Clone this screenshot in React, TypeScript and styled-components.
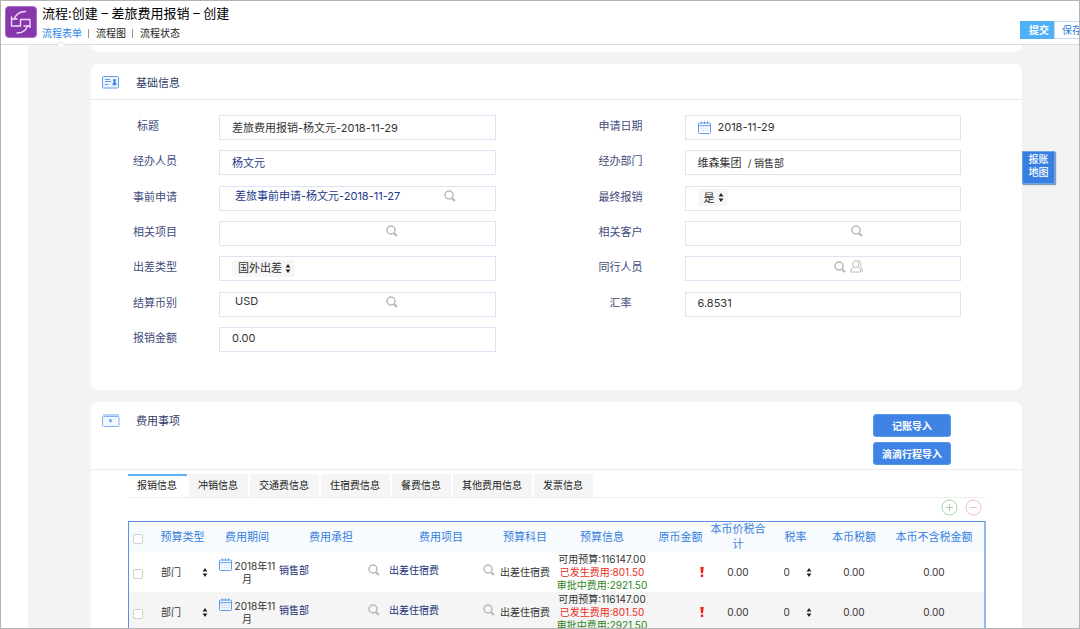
import React from "react";
import styled, { createGlobalStyle } from "styled-components";

const GlobalStyle = createGlobalStyle`
  *, *::before, *::after { box-sizing: border-box; }
  body {
    margin: 0;
    font-family: Inter, "Noto Sans CJK SC", sans-serif;
    font-size: 11px;
    color: #333;
    background: #fff;
  }
  button, input, select { font: inherit; color: inherit; }
  a { text-decoration: none; color: inherit; }
  h1, h2 { margin: 0; font-weight: 400; }
`;

const Page = styled.div`
  height: 100vh;
  display: flex;
  flex-direction: column;
  border: 1px solid #b4b4b4;
  overflow: hidden;
`;

const Header = styled.header`
  flex: none;
  display: flex;
  gap: 5px;
  height: 44px;
  padding: 5px 0 0 4px;
  border-bottom: 1px solid #dcdcdc;
`;

const Logo = styled.svg`
  flex: none;
  width: 32px;
  height: 32px;
`;

const Heading = styled.div`
  flex: 1;
  min-width: 0;
`;

const PageTitle = styled.h1`
  font-size: 13px;
  line-height: 14px;
  color: #000;
  white-space: nowrap;
`;

const Nav = styled.nav`
  display: flex;
  align-items: center;
  margin-top: 5px;
  font-size: 10px;
  line-height: 16px;
  color: #222;
`;

const NavLink = styled.a<{ $active?: boolean }>`
  position: relative;
  color: ${(p) => (p.$active ? "#2f86e8" : "#222")};
`;

const NavNotch = styled.svg`
  position: absolute;
  left: 14px;
  top: 16px;
  width: 10px;
  height: 6px;
`;

const NavDivider = styled.span`
  width: 1px;
  height: 9px;
  margin: 0 7px 0 6px;
  background: #999;
`;

const Actions = styled.div`
  flex: 0 0 59px;
  display: flex;
  align-items: flex-start;
  padding-top: 15px;
  overflow: hidden;
`;

const ActionButton = styled.button<{ $primary?: boolean }>`
  flex: none;
  height: 18px;
  padding: ${(p) => (p.$primary ? "0 4px 0 8px" : "0 7px")};
  font-size: 10px;
  line-height: 16px;
  border: 1px solid ${(p) => (p.$primary ? "#4fb0f8" : "#c3ddf7")};
  background: ${(p) => (p.$primary ? "#4fb0f8" : "#fff")};
  color: ${(p) => (p.$primary ? "#fff" : "#2f7fd8")};
  font-weight: ${(p) => (p.$primary ? 700 : 400)};
`;

const Body = styled.main`
  flex: 1;
  min-height: 0;
  margin-left: 27px;
  padding: 0 57px 0 63px;
  background: #f3f3f3;
  overflow: hidden;
`;

const Card = styled.section`
  margin-bottom: 12px;
  background: #fff;
  border-radius: 7px;
`;

const CardEnd = styled.div`
  height: 7px;
  margin-bottom: 12px;
  background: #fff;
  border-radius: 0 0 7px 7px;
`;

const CardHead = styled.div`
  display: flex;
  align-items: flex-start;
  min-height: 36px;
  padding: 12px 71px 4px 11px;
  border-bottom: 1px solid #ebecf0;
`;

const CardIcon = styled.svg`
  flex: none;
  width: 18px;
  height: 13px;
`;

const CardTitle = styled.h2`
  flex: 1;
  margin-left: 16px;
  font-size: 11px;
  line-height: 14px;
  color: #2f3b66;
`;

const ImportButtons = styled.div`
  display: flex;
  flex-direction: column;
  gap: 5px;
`;

const ImportButton = styled.button`
  width: 78px;
  height: 23px;
  padding: 0;
  border: 1px solid #5b98ea;
  border-radius: 3px;
  background: #3f84e4;
  color: #fff;
  font-size: 10px;
  font-weight: 700;
  line-height: 20px;
`;

const Form = styled.form`
  display: grid;
  grid-template-columns: 1fr 1fr;
  align-content: space-between;
  min-height: 237px;
  margin: 15px 0 0;
`;

const FormCard = styled(Card)`
  padding-bottom: 38px;
`;

const Field = styled.div`
  display: grid;
  grid-template-columns: 128px 1fr;
  padding-right: 61px;
`;

const FieldLabel = styled.label<{ $required?: boolean }>`
  padding-right: ${(p) => (p.$required ? 14 : 0)}px;
  line-height: 23px;
  text-align: center;
  color: #3f4b7c;
`;

const Box = styled.div`
  display: flex;
  align-items: center;
  height: 25px;
  padding: 0 0 1px 12px;
  border: 1px solid #dfe2f0;
  background: #fff;
`;

const PlainInput = styled.input`
  flex: 1;
  min-width: 0;
  height: 20px;
  padding: 0 0 1px;
  border: 0;
  outline: 0;
  background: none;
`;

const ValueLink = styled.a`
  color: #1c3a8a;
`;

const SmallText = styled.span`
  font-size: 10px;
`;

const Lookup = styled.div`
  display: flex;
  align-items: center;
  gap: 4px;
  padding-bottom: 3px;
`;

const LookupInput = styled.input<{ $width: number; $link?: boolean }>`
  width: ${(p) => p.$width}px;
  height: 18px;
  padding: 0 0 2px 3px;
  border: 0;
  outline: 0;
  background: none;
  color: ${(p) => (p.$link ? "#1c3a8a" : "#333")};
`;

const IconButton = styled.button`
  display: flex;
  padding: 0;
  border: 0;
  background: none;
`;

const DateBox = styled(Box)`
  gap: 7px;
  padding-bottom: 0;
`;

const SelectWrap = styled.span<{ $tint?: boolean; $width?: number }>`
  position: relative;
  display: inline-block;
  width: ${(p) => (p.$width ? `${p.$width}px` : "auto")};
  height: 17px;
  border-radius: 3px;
  background: ${(p) => (p.$tint ? "#f6f6f6" : "transparent")};

  select {
    width: ${(p) => (p.$width ? "100%" : "auto")};
    height: 17px;
    padding: 0 13px 0 6px;
    border: 0;
    outline: 0;
    background: none;
    appearance: none;
    line-height: 16px;
    display: block;
  }

  svg {
    position: absolute;
    right: ${(p) => (p.$width ? 2 : 4)}px;
    top: 4px;
    pointer-events: none;
  }
`;

const FloatButton = styled.button`
  position: absolute;
  top: 151px;
  right: 25px;
  width: 33px;
  height: 33px;
  padding: 0 5px 4px;
  border: 1px solid #6ba3ee;
  background: #3780e2;
  box-shadow: 1px 1px 1px #8a9bb5;
  color: #fff;
  font-size: 10px;
  font-weight: 500;
  line-height: 13px;
`;

const Detail = styled.div`
  padding: 4px 36px 0 37px;
`;

const Tabs = styled.div`
  display: flex;
  gap: 2px;
  border-bottom: 1px solid #f1eeee;
`;

const Tab = styled.button<{ $active?: boolean }>`
  height: 23px;
  padding: 0 10px 2px 9px;
  border: 0;
  border-top: 2px solid ${(p) => (p.$active ? "#5cb0f5" : "#f5f5f5")};
  background: ${(p) => (p.$active ? "#fff" : "#f5f5f5")};
  font-size: 10px;
  line-height: 19px;
  color: #222;
  white-space: nowrap;
`;

const RowTools = styled.div`
  display: flex;
  justify-content: flex-end;
  gap: 7px;
  padding: 1px 4px 5px 0;
`;

const ExpenseTable = styled.table`
  width: 100%;
  table-layout: fixed;
  border-collapse: separate;
  border-spacing: 0;
  border: 1px solid #5b93e0;
  border-right: 2px solid #93b8ea;
  font-size: 10px;

  th, td {
    padding: 0;
    text-align: center;
    vertical-align: middle;
    font-weight: 400;
  }
  th {
    height: 30px;
    font-size: 11px;
    line-height: 15px;
    color: #3580de;
    background: #f8fbfe;
  }
  td {
    height: 40px;
    line-height: 13px;
  }
  tbody tr:nth-child(even) td { background: #f5f5f5; }
`;

const Check = styled.input`
  appearance: none;
  display: block;
  width: 10px;
  height: 10px;
  margin: 3px 0 0 4px;
  border: 1px solid #cfcfcf;
  border-radius: 2px;
  background: #fff;
`;

const Period = styled.div`
  white-space: normal;

  svg {
    margin-right: 3px;
    vertical-align: -1px;
  }
`;

const CellLookup = styled.div`
  display: flex;
  align-items: center;
  justify-content: space-between;
  padding: 0 4px 4px 1px;
  color: #1c2f78;
`;

const ItemLookup = styled(CellLookup)`
  padding: 0 3px 4px 5px;
`;

const Line = styled.div<{ $color: string }>`
  color: ${(p) => p.$color};
  white-space: nowrap;
`;

const Alert = styled.svg`
  display: block;
  margin: 0 5px 0 auto;
`;

function SearchIcon() {
  return (
    <svg width="12" height="12" viewBox="0 0 12 12" fill="none" stroke="#b9b9b9">
      <circle cx="5" cy="5" r="4" strokeWidth="1.500" />
      <path d="M7.800 8.200l3.200 2.800" strokeWidth="2.200" />
    </svg>
  );
}

function PeopleIcon() {
  return (
    <svg width="13" height="13" viewBox="0 0 13 13" fill="none" stroke="#bcbcbc">
      <ellipse cx="5.800" cy="4" rx="3" ry="3.500" />
      <path d="M4 7C1.800 7.800.9 9.200.7 12h9.800c-.1-2.800-.9-4.200-2.900-5" />
      <path d="M8.300.8c2.700.1 3.500 3.500 1.700 5.400 1.400.7 2.200 2.200 2.400 4.800h-1.600" />
    </svg>
  );
}

function CalendarIcon() {
  return (
    <svg width="13" height="13" viewBox="0 0 13 13" fill="none" stroke="#5f9bea">
      <rect x=".5" y="2" width="12" height="10.500" rx="1" />
      <path d="M.5 4.700h12M3.500.5v2.500M6.500.5v2.500M9.500.5v2.500" />
      <path d="M2.500 7.200h8M2.500 9.700h8" strokeDasharray="1 1.300" strokeOpacity=".6" />
    </svg>
  );
}

function Arrows() {
  return (
    <svg width="6" height="9" viewBox="0 0 6 9" fill="#222">
      <path d="M3 0l2.400 3.500H.6zM3 9L.6 5.500h4.800z" />
    </svg>
  );
}

function Select(props: { label?: string; id?: string; value: string; tint?: boolean; width?: number }) {
  return (
    <SelectWrap $tint={props.tint} $width={props.width}>
      <select id={props.id} aria-label={props.label} defaultValue={props.value}>
        <option>{props.value}</option>
      </select>
      <Arrows />
    </SelectWrap>
  );
}

function LookupField(props: { id: string; value?: string; width: number; link?: boolean; people?: boolean }) {
  return (
    <Box>
      <Lookup>
        <LookupInput id={props.id} $width={props.width} $link={props.link} defaultValue={props.value ?? ""} />
        <IconButton type="button" aria-label="搜索"><SearchIcon /></IconButton>
        {props.people && <IconButton type="button" aria-label="选择人员"><PeopleIcon /></IconButton>}
      </Lookup>
    </Box>
  );
}

function FormField(props: { id: string; label: string; required?: boolean; children: React.ReactNode }) {
  return (
    <Field>
      <FieldLabel htmlFor={props.id} $required={props.required}>{props.label}</FieldLabel>
      {props.children}
    </Field>
  );
}

const tabs = ["报销信息", "冲销信息", "交通费信息", "住宿费信息", "餐费信息", "其他费用信息", "发票信息"];

const columns: [string, number][] = [
  ["", 20],
  ["预算类型", 67],
  ["费用期间", 62],
  ["费用承担", 106],
  ["费用项目", 114],
  ["预算科目", 54],
  ["预算信息", 100],
  ["原币金额", 57],
  ["本币价税合计", 58],
  ["税率", 57],
  ["本币税额", 60],
  ["本币不含税金额", 100],
];

const Col = styled.col<{ $w: number }>`
  width: ${(p) => p.$w}px;
`;

const rows = [1, 2];

export default function App() {
  return (
    <Page>
      <GlobalStyle />
      <Header>
        <Logo viewBox="0 0 32 32" fill="none">
          <rect x=".5" y=".5" width="31" height="31" rx="3.500" fill="#8638ab" stroke="#a86cc6" />
          <g stroke="#f3d9fa" strokeWidth="1.400" strokeLinejoin="round" strokeLinecap="round">
            <path d="M20.500 5.500C14 5.500 11 8.500 9 13" />
            <path d="M6.500 11v9h9v-6.500h9.500v8" />
            <path d="M6.500 13h5.500M19 20h5.500" />
            <path d="M12 27c6 0 9-3 10.500-7" />
          </g>
        </Logo>
        <Heading>
          <PageTitle>流程:创建 – 差旅费用报销 – 创建</PageTitle>
          <Nav>
            <NavLink href="#form" $active>
              流程表单
              <NavNotch viewBox="0 0 10 6" fill="#fff" stroke="#dcdcdc">
                <path d="M0 5.500l5-5 5 5" />
              </NavNotch>
            </NavLink>
            <NavDivider />
            <NavLink href="#chart">流程图</NavLink>
            <NavDivider />
            <NavLink href="#state">流程状态</NavLink>
          </Nav>
        </Heading>
        <Actions>
          <ActionButton $primary>提交</ActionButton>
          <ActionButton>保存</ActionButton>
        </Actions>
      </Header>

      <Body>
        <CardEnd />
        <FormCard>
          <CardHead>
            <CardIcon viewBox="0 0 18 13" fill="none" stroke="#5f9bea">
              <rect x=".5" y=".5" width="16" height="11.500" rx="1" fill="#edf4fd" />
              <path d="M3 3.500h5M3 5.500h6M3 8.500h3" />
              <circle cx="12.500" cy="4.500" r="1.400" fill="#3f84e4" stroke="none" />
              <path d="M10.500 9.200c0-4.500 4-4.500 4 0z" fill="#3f84e4" stroke="none" />
            </CardIcon>
            <CardTitle>基础信息</CardTitle>
          </CardHead>
          <Form>
            <FormField id="title" label="标题" required>
              <Box><PlainInput id="title" defaultValue="差旅费用报销-杨文元-2018-11-29" /></Box>
            </FormField>
            <FormField id="date" label="申请日期">
              <DateBox><CalendarIcon /><PlainInput id="date" defaultValue="2018-11-29" /></DateBox>
            </FormField>
            <FormField id="person" label="经办人员">
              <Box><ValueLink id="person" href="#person">杨文元</ValueLink></Box>
            </FormField>
            <FormField id="dept" label="经办部门">
              <Box><span id="dept">维森集团&nbsp; <SmallText>/ 销售部</SmallText></span></Box>
            </FormField>
            <FormField id="prior" label="事前申请">
              <LookupField id="prior" width={208} link value="差旅事前申请-杨文元-2018-11-27" />
            </FormField>
            <FormField id="final" label="最终报销">
              <Box><Select id="final" value="是" tint /></Box>
            </FormField>
            <FormField id="project" label="相关项目">
              <LookupField id="project" width={150} />
            </FormField>
            <FormField id="customer" label="相关客户">
              <LookupField id="customer" width={149} />
            </FormField>
            <FormField id="trip" label="出差类型">
              <Box><Select id="trip" value="国外出差" tint /></Box>
            </FormField>
            <FormField id="peers" label="同行人员">
              <LookupField id="peers" width={132} people />
            </FormField>
            <FormField id="currency" label="结算币别">
              <LookupField id="currency" width={150} value="USD" />
            </FormField>
            <FormField id="rate" label="汇率">
              <Box><PlainInput id="rate" defaultValue="6.8531" /></Box>
            </FormField>
            <FormField id="amount" label="报销金额">
              <Box><PlainInput id="amount" defaultValue="0.00" /></Box>
            </FormField>
          </Form>
        </FormCard>

        <Card>
          <CardHead>
            <CardIcon viewBox="0 0 18 13" fill="none" stroke="#7fb0f2">
              <rect x="1.500" y=".5" width="15" height="2" fill="#b9d5f8" stroke="#b9d5f8" />
              <rect x=".5" y="2.500" width="16.500" height="10" rx="1" fill="#f4f8fe" />
              <path d="M6.500 5.500h4L8.500 9z" fill="#5f9bea" stroke="none" />
            </CardIcon>
            <CardTitle>费用事项</CardTitle>
            <ImportButtons>
              <ImportButton>记账导入</ImportButton>
              <ImportButton>滴滴行程导入</ImportButton>
            </ImportButtons>
          </CardHead>
          <Detail>
            <Tabs role="tablist">
              {tabs.map((t, i) => (
                <Tab key={t} role="tab" aria-selected={i === 0} $active={i === 0}>{t}</Tab>
              ))}
            </Tabs>
            <RowTools>
              <IconButton aria-label="添加">
                <svg width="17" height="17" viewBox="0 0 17 17" fill="none" stroke="#a5d6a8">
                  <circle cx="8.500" cy="8.500" r="7.500" />
                  <path d="M5 8.500h7M8.500 5v7" />
                </svg>
              </IconButton>
              <IconButton aria-label="删除">
                <svg width="17" height="17" viewBox="0 0 17 17" fill="none" stroke="#f0bcc0">
                  <circle cx="8.500" cy="8.500" r="7.500" />
                  <path d="M5 8.500h7" />
                </svg>
              </IconButton>
            </RowTools>
            <ExpenseTable>
              <colgroup>
                {columns.map(([name, w]) => <Col key={name} $w={w} />)}
              </colgroup>
              <thead>
                <tr>
                  {columns.map(([name]) => (
                    <th key={name} scope="col">{name || <Check type="checkbox" aria-label="全选" />}</th>
                  ))}
                </tr>
              </thead>
              <tbody>
                {rows.map((r) => (
                  <tr key={r}>
                    <td><Check type="checkbox" aria-label="选择" /></td>
                    <td><Select label="预算类型" value="部门" width={55} /></td>
                    <td><Period><CalendarIcon />2018年11月</Period></td>
                    <td><CellLookup><a href="#dept">销售部</a><IconButton aria-label="搜索"><SearchIcon /></IconButton></CellLookup></td>
                    <td><ItemLookup><a href="#item">出差住宿费</a><IconButton aria-label="搜索"><SearchIcon /></IconButton></ItemLookup></td>
                    <td>出差住宿费</td>
                    <td>
                      <Line $color="#333">可用预算:116147.00</Line>
                      <Line $color="#ee2a20">已发生费用:801.50</Line>
                      <Line $color="#2b8420">审批中费用:2921.50</Line>
                    </td>
                    <td>
                      <Alert width="4" height="10" viewBox="0 0 4 10" fill="#ee2018">
                        <path d="M.3 0h3.400L3 6.300H1zM.8 7.500h2.400v2.500H.8z" />
                      </Alert>
                    </td>
                    <td>0.00</td>
                    <td><Select label="税率" value="0" width={36} /></td>
                    <td>0.00</td>
                    <td>0.00</td>
                  </tr>
                ))}
              </tbody>
            </ExpenseTable>
          </Detail>
        </Card>
      </Body>
      <FloatButton>报账地图</FloatButton>
    </Page>
  );
}
